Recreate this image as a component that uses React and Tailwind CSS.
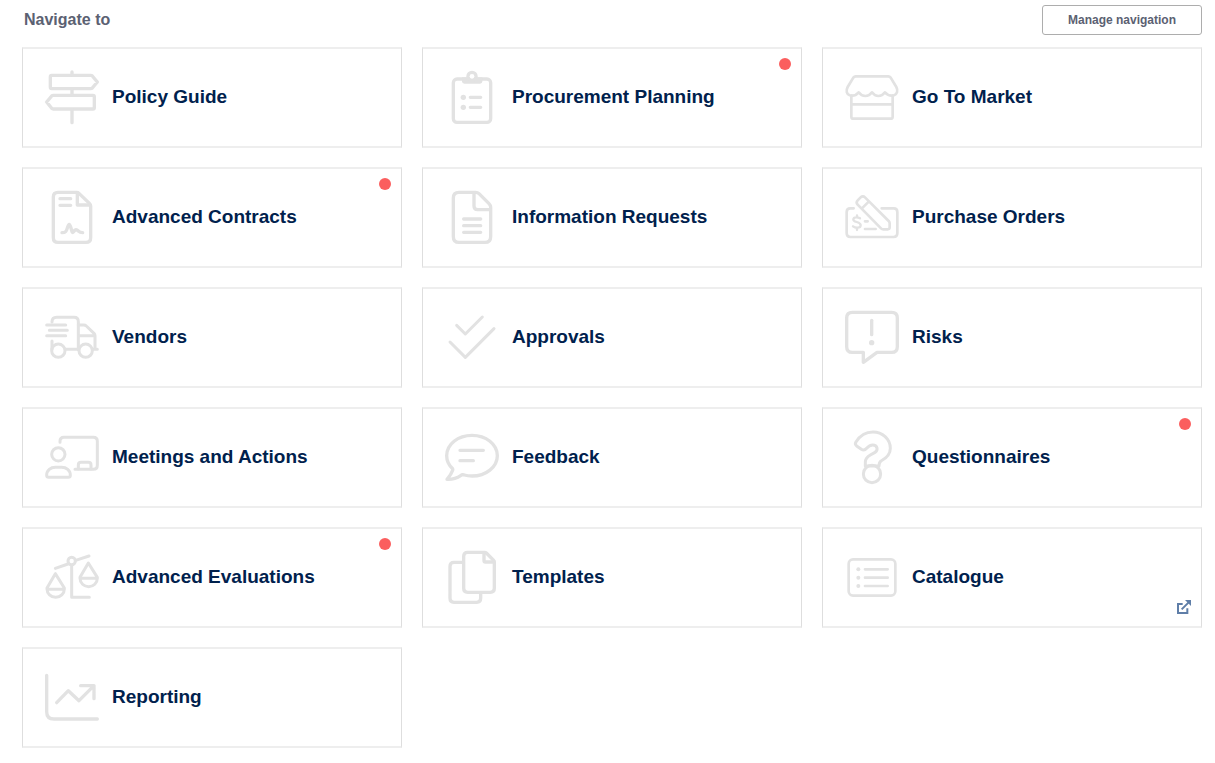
import React from 'react';

const icons = {
  signpost: (
    <>
      <path d="M20 15h117q3 0 5 2l15 18-15 18q-2 2-5 2H20q-4 0-4-4V19q0-4 4-4z" />
      <path d="M144 75H25q-3 0-5 2L5 95l15 19q2 2 5 2h119q4 0 4-4V79q0-4-4-4z" />
      <path d="M81 5v8M81 56v18M81 118v39" />
    </>
  ),
  clipboard: (
    <>
      <rect x="25" y="26" width="112" height="130" rx="11" />
      <path d="M51 21h61v12q0 7-7 7H58q-7 0-7-7z" fill="currentColor" stroke="none" />
      <circle cx="81" cy="18" r="17" fill="currentColor" stroke="none" />
      <circle cx="81" cy="18" r="7" fill="white" stroke="none" />
      <circle cx="55" cy="81" r="8" fill="currentColor" stroke="none" />
      <circle cx="55" cy="111" r="8" fill="currentColor" stroke="none" />
      <path d="M76 81h31M76 111h31" />
    </>
  ),
  store: (
    <g strokeWidth="8">
      <path d="M32 18h98q4 0 7 4l17 28c6 11 2 22-7 25-11 3-20-1-27-9-5 7-12 11-20 11s-14-4-19-11c-5 7-12 11-20 11s-15-4-20-11c-7 8-17 12-27 9-9-3-12-14-6-25l17-28q3-4 7-4z" />
      <path d="M19 76v63q0 6 6 6h112q6 0 6-6V76M19 102h124" />
    </g>
  ),
  contract: (
    <>
      <path d="M39 6h56q4 0 7 3l32 31q3 3 3 7v95q0 14-14 14H39q-14 0-14-14V20Q25 6 39 6z" />
      <path d="M97 8v36h38M45 25h32M45 45h32" />
      <path d="M51 127c11 0 13-4 16-14 4-14 7-14 11 0 3 12 4 16 7 12 6-9 10-8 15-3 4 4 6 5 13 5" />
    </>
  ),
  document: (
    <>
      <path d="M42 6h50q6 0 10 4l30 30q5 5 5 11v88q0 17-17 17H42q-17 0-17-17V23Q25 6 42 6z" />
      <path d="M87 8v39q0 11 11 11h37M56 86h51M56 106h51M56 126h51" />
    </>
  ),
  cheque: (
    <g strokeWidth="8">
      <path d="M26 54H16Q5 54 5 65v64q0 11 11 11h130q11 0 11-11V65q0-11-11-11h-36" />
      <path d="M38 43q-6-7 0-13l9-9q7-6 13 0l71 71q3 3 3 7v12q0 6-6 6h-13q-4 0-7-3zM50 55l22-22" />
      <path d="M45 84c-6-4-19-5-20 3-1 10 23 6 22 18-1 9-15 9-23 3M36 75v5M36 113v6" strokeWidth="7" />
      <path d="M60 93h8M60 116h32" />
    </g>
  ),
  truck: (
    <g strokeWidth="9">
      <path d="M21 35q0-14 14-14h52q13 0 13 13v84M21 92v25" />
      <path d="M5 44h57M13 60h54M5 76h57M62 117h39" />
      <path d="M100 44h16q5 0 8 3l23 22q3 3 3 7v41M102 76h46M143 117h14" />
      <circle cx="40" cy="121" r="20" />
      <circle cx="122" cy="121" r="20" />
    </g>
  ),
  meeting: (
    <g strokeWidth="9">
      <path d="M45 36v-3q0-12 12-12h88q12 0 12 12v72q0 12-12 12H90" />
      <path d="M100 116v-12q0-8 8-8h22q8 0 8 8v12" />
      <circle cx="40" cy="72" r="20" />
      <path d="M11 141h59q6 0 6-6c0-15-12-24-26-24H31c-14 0-26 9-26 24q0 6 6 6z" />
    </g>
  ),
  scales: (
    <g strokeWidth="9">
      <circle cx="80" cy="32" r="11" />
      <path d="M31 54l38-13M92 30l40-13M80 46v95h53" />
      <path d="M31 70L6 113v3a26 25 0 0 0 52 0v-3zM6 117h52" />
      <path d="M130 38l-25 43v3a26 25 0 0 0 52 0v-3zM105 84h52" />
    </g>
  ),
  chart: (
    <>
      <path d="M5 15v109q0 22 22 22h130" />
      <path d="M35 97l35-36 32 30 45-45M107 46h40v39" />
    </>
  ),
  checks: (
    <g strokeWidth="9">
      <path d="M35 45l26 26 51-51" />
      <path d="M15 95l46 46 86-86" />
    </g>
  ),
  comment: (
    <>
      <path d="M23 115C11 104 5 91 5 76c0-34 34-61 76-61s76 27 76 61-34 61-76 61c-8 0-16-1-23-3-4-1-7-2-10 1-12 8-26 13-42 12 8-9 14-18 17-27q1-3 0-5z" />
      <path d="M45 60h70M45 91h40" />
    </>
  ),
  templates: (
    <>
      <path d="M68 6h51q3 0 5 2l22 22q2 2 2 5v79q0 12-12 12H68q-12 0-12-12V18Q56 6 68 6z" />
      <path d="M117 8v23q0 4 4 4h26M54 36H27q-12 0-12 12v96q0 12 12 12h68q12 0 12-12v-15" />
    </>
  ),
  risk: (
    <>
      <path d="M22 6h118q17 0 17 17v86q0 17-17 17H96l-41 30v-30H22q-17 0-17-17V23Q5 6 22 6z" />
      <path d="M80 30v43" />
      <circle cx="80" cy="97" r="8" fill="currentColor" stroke="none" />
    </>
  ),
  question: (
    <g strokeWidth="9">
      <path d="M61 107V95c0-10 5-15 15-21l14-8c10-6 8-22-7-22-9 0-13 4-18 10s-11 6-16 3l-13-9c-5-4-6-9-3-13C44 17 60 5 84 5c28 0 52 21 52 49 0 22-16 32-28 38-6 4-6 7-6 15" />
      <circle cx="81" cy="131" r="26" />
      <path d="M64 107h34" />
    </g>
  ),
  catalogue: (
    <g strokeWidth="8">
      <rect x="11" y="27" width="140" height="109" rx="13" />
      <path d="M60 57h68M60 82h68M60 107h68" />
      <circle cx="40" cy="57" r="6" fill="currentColor" stroke="none" />
      <circle cx="40" cy="82" r="6" fill="currentColor" stroke="none" />
      <circle cx="40" cy="107" r="6" fill="currentColor" stroke="none" />
    </g>
  ),
};

const items = [
  { label: 'Policy Guide', icon: 'signpost' },
  { label: 'Procurement Planning', icon: 'clipboard', alert: true },
  { label: 'Go To Market', icon: 'store' },
  { label: 'Advanced Contracts', icon: 'contract', alert: true },
  { label: 'Information Requests', icon: 'document' },
  { label: 'Purchase Orders', icon: 'cheque' },
  { label: 'Vendors', icon: 'truck' },
  { label: 'Approvals', icon: 'checks' },
  { label: 'Risks', icon: 'risk' },
  { label: 'Meetings and Actions', icon: 'meeting' },
  { label: 'Feedback', icon: 'comment' },
  { label: 'Questionnaires', icon: 'question', alert: true },
  { label: 'Advanced Evaluations', icon: 'scales', alert: true },
  { label: 'Templates', icon: 'templates' },
  { label: 'Catalogue', icon: 'catalogue', external: true },
  { label: 'Reporting', icon: 'chart' },
];

function TileIcon({ name }) {
  return (
    <svg
      viewBox="0 -1 162 162"
      className="w-[54px] h-[54px] shrink-0 overflow-visible text-[#e2e2e2]"
      fill="none"
      stroke="currentColor"
      strokeWidth="10"
      strokeLinecap="round"
      strokeLinejoin="round"
      aria-hidden="true"
    >
      {icons[name]}
    </svg>
  );
}

function ExternalIcon() {
  return (
    <svg
      viewBox="0 0 42 42"
      className="absolute right-[10px] bottom-3 w-3.5 h-3.5 text-[#5f7ea8]"
      fill="none"
      stroke="currentColor"
      strokeWidth="6"
      aria-hidden="true"
    >
      <path d="M17 12H3v27h28V25M14 28L35 7" />
      <path d="M24 0h18v18z" fill="currentColor" stroke="none" />
    </svg>
  );
}

function Tile({ label, icon, alert, external }) {
  return (
    <a
      href="#"
      className="relative flex items-center gap-[13px] h-[101px] pl-[22px] pr-6 pb-px bg-white border-x border-y-2 border-x-[#dedede] border-y-[#eeeeee] hover:bg-gray-50"
    >
      <TileIcon name={icon} />
      <span className="text-[19px] leading-6 font-bold text-[#00214d]">{label}</span>
      {alert && <span className="absolute top-[9px] right-[10px] w-3 h-3 rounded-full bg-[#fb5e5e]" />}
      {external && <ExternalIcon />}
    </a>
  );
}

function App() {
  return (
    <div className="min-h-screen bg-white pt-[5px] pb-4 pl-[22px] pr-[13px] font-['Liberation_Sans',Arial,sans-serif]">
      <header className="flex items-center justify-between mb-3">
        <h1 className="pl-0.5 text-base leading-6 font-bold text-[#5b6172]">Navigate to</h1>
        <button
          type="button"
          className="h-[30px] min-w-[160px] px-4 border border-[#adadad] rounded-[3px] bg-white text-xs font-bold text-[#5b6172] hover:bg-gray-50"
        >
          Manage navigation
        </button>
      </header>

      <nav className="grid grid-cols-1 sm:grid-cols-2 lg:grid-cols-3 gap-x-5 gap-y-[19px]">
        {items.map((item) => (
          <Tile key={item.label} {...item} />
        ))}
      </nav>
    </div>
  );
}

export default App;
